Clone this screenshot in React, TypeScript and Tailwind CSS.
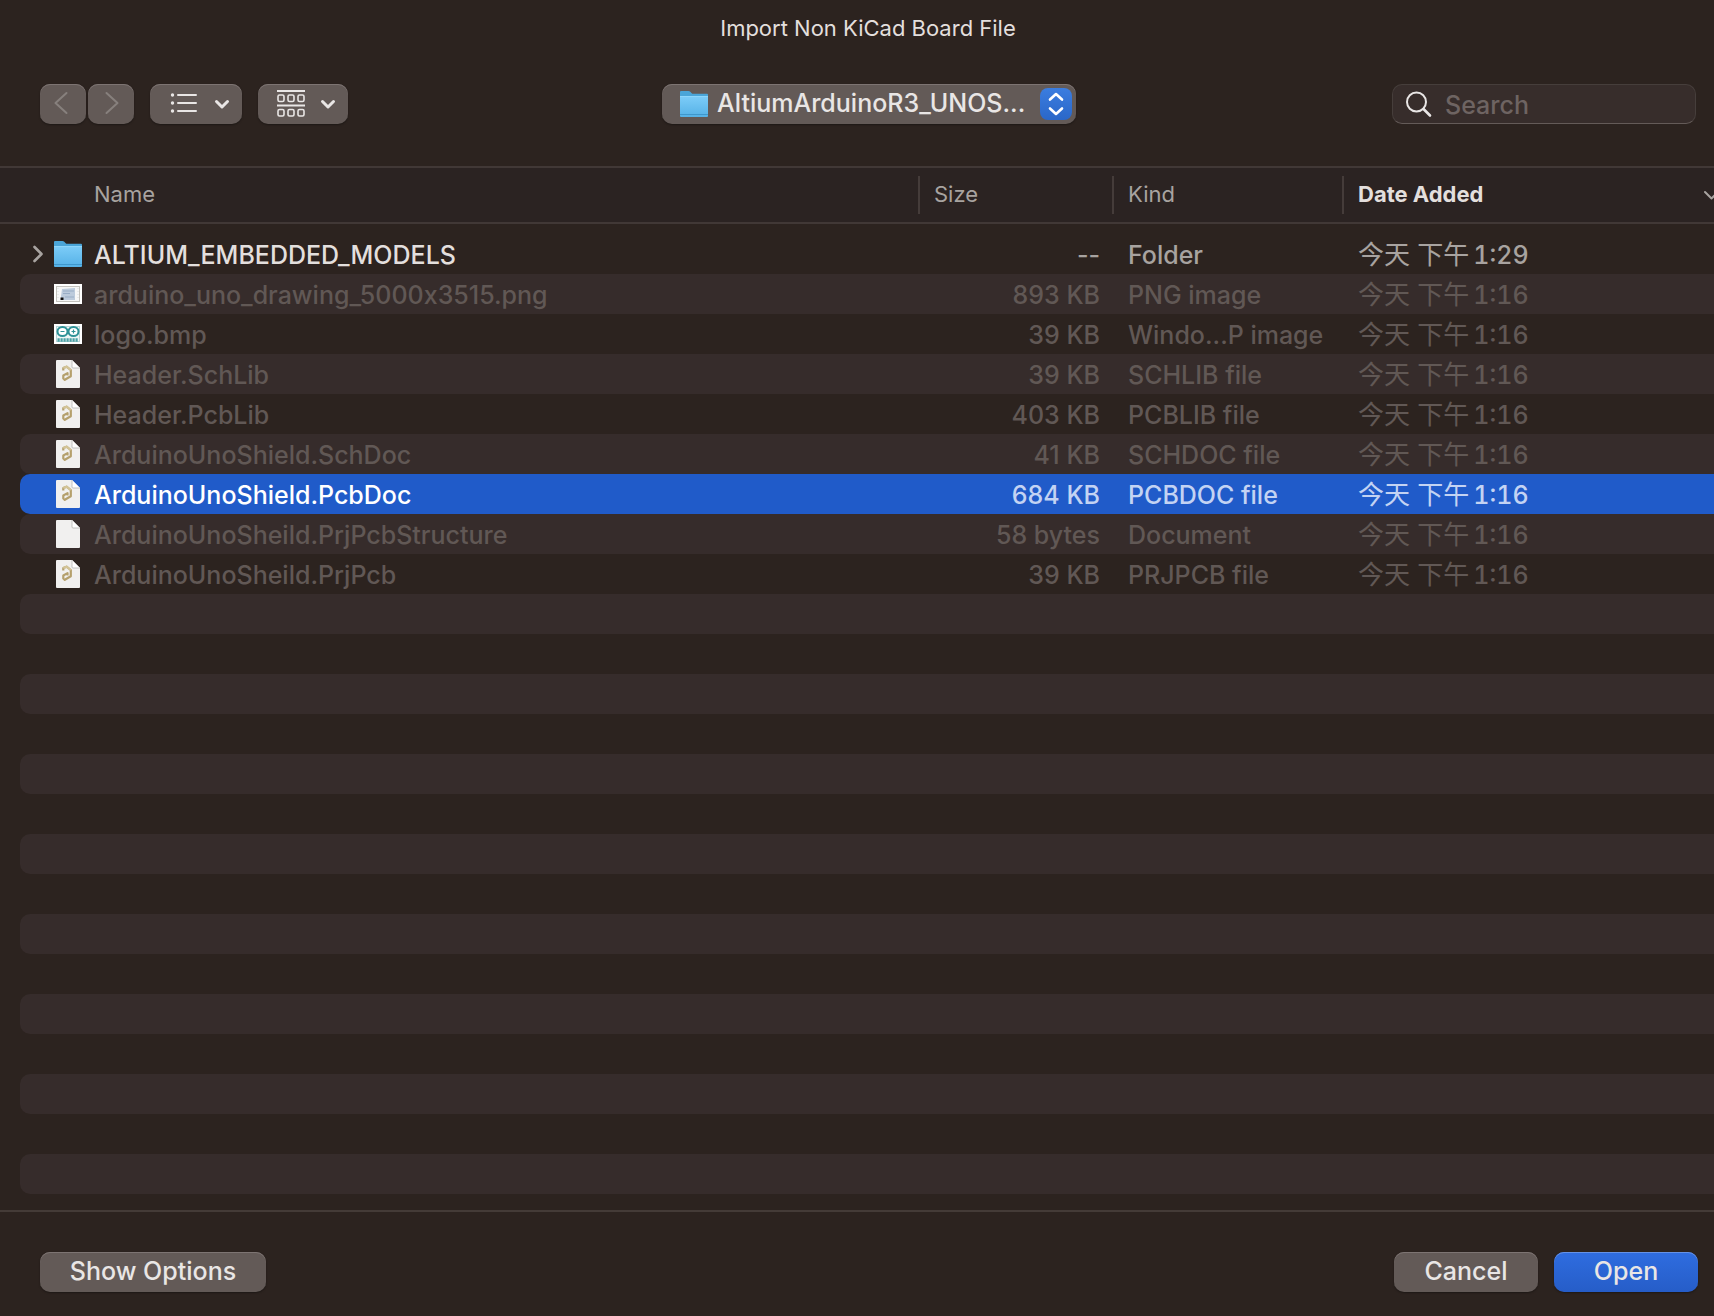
import React from "react";

const FONT = "font-['Inter','Noto_Sans_CJK_SC',sans-serif]";

type IconKind = "folder" | "png" | "logo" | "altium" | "blank";
type Entry = {
  name: string;
  size: string;
  kind: string;
  date: string;
  time: string;
  icon: IconKind;
  state: "enabled" | "disabled" | "selected";
};

const FILES: Entry[] = [
  { name: "ALTIUM_EMBEDDED_MODELS", size: "--", kind: "Folder", date: "今天 下午", time: "1:29", icon: "folder", state: "enabled" },
  { name: "arduino_uno_drawing_5000x3515.png", size: "893 KB", kind: "PNG image", date: "今天 下午", time: "1:16", icon: "png", state: "disabled" },
  { name: "logo.bmp", size: "39 KB", kind: "Windo...P image", date: "今天 下午", time: "1:16", icon: "logo", state: "disabled" },
  { name: "Header.SchLib", size: "39 KB", kind: "SCHLIB file", date: "今天 下午", time: "1:16", icon: "altium", state: "disabled" },
  { name: "Header.PcbLib", size: "403 KB", kind: "PCBLIB file", date: "今天 下午", time: "1:16", icon: "altium", state: "disabled" },
  { name: "ArduinoUnoShield.SchDoc", size: "41 KB", kind: "SCHDOC file", date: "今天 下午", time: "1:16", icon: "altium", state: "disabled" },
  { name: "ArduinoUnoShield.PcbDoc", size: "684 KB", kind: "PCBDOC file", date: "今天 下午", time: "1:16", icon: "altium", state: "selected" },
  { name: "ArduinoUnoSheild.PrjPcbStructure", size: "58 bytes", kind: "Document", date: "今天 下午", time: "1:16", icon: "blank", state: "disabled" },
  { name: "ArduinoUnoSheild.PrjPcb", size: "39 KB", kind: "PRJPCB file", date: "今天 下午", time: "1:16", icon: "altium", state: "disabled" },
];
const EMPTY_ROWS = Array.from({ length: 15 }, (_, i) => i + FILES.length);

function FolderIcon() {
  return (
    <svg width="30" height="30" viewBox="0 0 30 30" className="shrink-0" aria-hidden="true">
      <defs>
        <linearGradient id="folderFront" x1="0" y1="0" x2="0" y2="1">
          <stop offset="0" stopColor="#7cccf8" />
          <stop offset="1" stopColor="#55b1e6" />
        </linearGradient>
      </defs>
      <path d="M1 3q0-1 1-1h7.500q1 0 1.800.8l1.400 1.400q.6.600 1.500.6H28q1 0 1 1V12H1z" fill="#4aa5d8" />
      <path d="M1 7.500h28V27q0 1-1 1H2q-1 0-1-1z" fill="url(#folderFront)" />
      <path d="M1 7.500h28" stroke="#8ed6fb" strokeWidth="1" />
      <path d="M1 25.500h28" stroke="#3f97cb" strokeWidth="1" />
    </svg>
  );
}

function PngIcon() {
  return (
    <svg width="30" height="30" viewBox="0 0 30 30" className="shrink-0" aria-hidden="true">
      <rect x="1" y="5" width="28" height="20" fill="#fff" />
      <rect x="3.500" y="7.500" width="23" height="15" fill="#f6f7f7" stroke="#c4c3be" strokeWidth="1" />
      <path d="M5 9v12M25 9v12" stroke="#d9dcde" strokeWidth="1" strokeDasharray="1 2" />
      <path d="M9 10l13-1v12H8v-4z" fill="#bccbdc" />
      <path d="M10 12h11M10 14.500h7M12 18h9" stroke="#98adc5" strokeWidth="1" />
      <rect x="7.500" y="18.500" width="3" height="2.500" fill="#111" />
    </svg>
  );
}

function ArduinoIcon() {
  return (
    <svg width="30" height="30" viewBox="0 0 30 30" className="shrink-0" aria-hidden="true">
      <rect x="1" y="5" width="28" height="20" fill="#fff" />
      <rect x="3.500" y="7.500" width="23" height="15" fill="#eef6f6" stroke="#b4d4d6" strokeWidth="1" />
      <ellipse cx="9.500" cy="12.500" rx="5" ry="4.500" fill="#fff" stroke="#2f9297" strokeWidth="2" />
      <ellipse cx="20.500" cy="12.500" rx="5" ry="4.500" fill="#fff" stroke="#2f9297" strokeWidth="2" />
      <path d="M7.500 12.500h4M18.500 12.500h4M20.500 10.500v4" stroke="#2f9297" strokeWidth="1.200" />
      <path d="M4.500 21h21" stroke="#4ba1a5" strokeWidth="3.500" strokeDasharray="2.200 .8" />
    </svg>
  );
}

function DocIcon({ altium }: { altium: boolean }) {
  return (
    <svg width="30" height="30" viewBox="0 0 30 30" className="shrink-0" aria-hidden="true">
      <path d="M3 2q0-1 1-1h15l8 8v19q0 1-1 1H4q-1 0-1-1z" fill="#f1f0ef" />
      <path d="M19 1v7q0 1 1 1h7z" fill="#fff" />
      <path d="M19 1v7q0 1 1 1h7" fill="none" stroke="#b4b2b0" strokeWidth=".8" />
      {altium && (
        <g fill="none" strokeWidth="2.200" strokeLinejoin="round">
          <path d="M10.300 11.500V9l3.200-1.300 4.300 3.300v6.300l-6 3.500-1.500-1.300v-3l4.200-2.400v2.400" stroke="#b5a06c" />
          <path d="M10.300 9l3.200-1.300 4.300 3.300" stroke="#d3c497" />
        </g>
      )}
    </svg>
  );
}

function FileIcon({ kind }: { kind: IconKind }) {
  if (kind === "folder") return <FolderIcon />;
  if (kind === "png") return <PngIcon />;
  if (kind === "logo") return <ArduinoIcon />;
  return <DocIcon altium={kind === "altium"} />;
}

function ChevronDown() {
  return (
    <svg width="16" height="12" viewBox="0 0 16 12" fill="none" stroke="#e9e6e5" strokeWidth="3" strokeLinecap="round" strokeLinejoin="round" aria-hidden="true">
      <path d="M2.500 3.500l5.500 5.500L13.500 3.500" />
    </svg>
  );
}

const CONTROL = "h-10 rounded-[10px] bg-[#635a57] shadow-[inset_0_1px_0_#7d7472,0_1px_2px_rgba(0,0,0,0.35)]";

function Toolbar() {
  return (
    <div className="flex items-center justify-between pr-[18px] pl-10">
      <div className="flex flex-1 items-center pr-0.5">
        <button aria-label="Back" disabled className={`${CONTROL} flex w-[46px] items-center justify-center pr-1 pb-0.5`}>
          <svg width="16" height="24" viewBox="0 0 16 24" fill="none" stroke="#87807d" strokeWidth="2" strokeLinecap="round" strokeLinejoin="round">
            <path d="M13.500 2L2.500 12l11 10" />
          </svg>
        </button>
        <button aria-label="Forward" disabled className={`${CONTROL} ml-0.5 flex w-[46px] items-center justify-center pb-0.5`}>
          <svg width="16" height="24" viewBox="0 0 16 24" fill="none" stroke="#87807d" strokeWidth="2" strokeLinecap="round" strokeLinejoin="round">
            <path d="M3.500 2l11 10-11 10" />
          </svg>
        </button>
        <button aria-label="List view" className={`${CONTROL} ml-4 flex w-[92px] items-center justify-between pr-3 pl-5`}>
          <svg width="28" height="24" viewBox="0 0 28 24" fill="none" stroke="#e9e6e5" strokeWidth="2" strokeLinecap="round" aria-hidden="true">
            <path d="M8 3h18M8 11h18M8 19h18" />
            <path d="M2.500 3h.01M2.500 11h.01M2.500 19h.01" strokeWidth="3.400" />
          </svg>
          <ChevronDown />
        </button>
        <button aria-label="Group items" className={`${CONTROL} ml-4 flex w-[90px] items-center justify-between pr-3 pl-[18px]`}>
          <svg width="30" height="28" viewBox="0 0 30 28" fill="none" stroke="#e9e6e5" strokeWidth="1.600" aria-hidden="true">
            <path d="M1 1h28M1 15.500h28" strokeWidth="2" />
            <rect x="2" y="5" width="6" height="6.500" rx="1.500" />
            <rect x="12" y="5" width="6" height="6.500" rx="1.500" />
            <rect x="22" y="5" width="6" height="6.500" rx="1.500" />
            <rect x="2" y="19.500" width="6" height="6.500" rx="1.500" />
            <rect x="12" y="19.500" width="6" height="6.500" rx="1.500" />
            <rect x="22" y="19.500" width="6" height="6.500" rx="1.500" />
          </svg>
          <ChevronDown />
        </button>
      </div>
      <button className={`${CONTROL} flex w-[414px] items-center pr-1 pl-[17px] text-[25px] font-medium text-[#e9e6e5]`}>
        <FolderIcon />
        <span className="ml-2 flex-1 text-left whitespace-nowrap">AltiumArduinoR3_UNOS...</span>
        <span className="flex size-8 items-center justify-center rounded-lg bg-linear-to-b from-[#3b7de0] to-[#2a67c8]">
          <svg width="16" height="24" viewBox="0 0 16 24" fill="none" stroke="#fff" strokeWidth="2.600" strokeLinecap="round" strokeLinejoin="round" aria-hidden="true">
            <path d="M2 7.500L8 2l6 5.500M2 16.500L8 22l6-5.500" />
          </svg>
        </span>
      </button>
      <div className="flex flex-1 justify-end">
        <label className="flex h-10 w-[304px] items-center rounded-[10px] border border-[#463e3b] border-b-[#645b58] bg-[#372d2b] pl-3">
          <svg width="28" height="28" viewBox="0 0 28 28" fill="none" stroke="#e9e6e5" strokeLinecap="round" aria-hidden="true">
            <circle cx="11.500" cy="12" r="9.500" strokeWidth="2" />
            <path d="M18.500 19l6.500 6.500" strokeWidth="2.600" />
          </svg>
          <input
            type="text"
            aria-label="Search"
            placeholder="Search"
            className="ml-3 w-0 flex-1 bg-transparent pt-1 text-[25px] font-medium outline-none placeholder:text-[#6e6462]"
          />
        </label>
      </div>
    </div>
  );
}

function HeaderCell({ label }: { label: string }) {
  return (
    <th scope="col" className="border-y-2 border-[#413836] p-0 text-left font-normal">
      <button className="flex h-[38px] w-full items-center border-l-2 border-[#453c3a] pb-0.5 pl-[14px]">{label}</button>
    </th>
  );
}

function rowColors(state: Entry["state"]) {
  if (state === "enabled") return "text-[#a8a3a0]";
  if (state === "selected") return "text-[#c3d3f3]";
  return "text-[#615855]";
}

function rowFill(index: number, selected: boolean) {
  if (selected) return "bg-[#205bc9]";
  return index % 2 ? "bg-[#362c2b]" : "";
}

function FileTable() {
  return (
    <div className="overflow-hidden pb-4">
      <table className="w-full table-fixed border-separate border-spacing-0 text-[25px] leading-9">
        <colgroup>
          <col className="w-5" />
          <col />
          <col className="w-[194px]" />
          <col className="w-[230px]" />
          <col className="w-[372px]" />
        </colgroup>
        <thead>
          <tr className="h-[58px] bg-[#2b2322] text-[22px] text-[#a8a3a0]">
            <th scope="col" colSpan={2} className="border-y-2 border-[#413836] p-0 pb-0.5 pl-[94px] text-left font-normal">
              <button className="block">Name</button>
            </th>
            <HeaderCell label="Size" />
            <HeaderCell label="Kind" />
            <th scope="col" aria-sort="descending" className="border-y-2 border-[#413836] p-0 text-left">
              <button className="flex h-[38px] w-full items-center justify-between border-l-2 border-[#453c3a] pb-0.5 pl-[14px] font-bold text-[#e3dfdd]">
                Date Added
                <svg width="16" height="12" viewBox="0 0 16 12" className="-mr-1.5 shrink-0" fill="none" stroke="#a8a3a0" strokeWidth="2" strokeLinecap="round" strokeLinejoin="round" aria-hidden="true">
                  <path d="M1 4l6.500 6.500L14 4" />
                </svg>
              </button>
            </th>
          </tr>
        </thead>
        <tbody className="font-medium before:block before:h-2.5 before:content-['']">
          {FILES.map((file, index) => {
            const fill = rowFill(index, file.state === "selected");
            const nameColor =
              file.state === "enabled" ? "text-[#e3dfdd]" : file.state === "selected" ? "text-white" : "";
            return (
              <tr key={file.name} className={`h-10 whitespace-nowrap ${rowColors(file.state)}`}>
                <td className="p-0" />
                <td className={`rounded-l-[10px] p-0 ${fill}`}>
                  <div className="flex h-10 items-center pl-[11px]">
                    <span className="flex w-[22px] items-center">
                      {file.icon === "folder" && (
                        <button aria-label="Expand folder" className="flex">
                          <svg width="14" height="20" viewBox="0 0 14 20" fill="none" stroke="#a8a3a0" strokeWidth="2.600" strokeLinecap="round" strokeLinejoin="round">
                            <path d="M3.500 3l7 7-7 7" />
                          </svg>
                        </button>
                      )}
                    </span>
                    <FileIcon kind={file.icon} />
                    <span className={`ml-[11px] pt-0.5 [font-feature-settings:'calt'_0] ${nameColor}`}>{file.name}</span>
                  </div>
                </td>
                <td className={`p-0 pt-0.5 pr-3 text-right ${fill}`}>{file.size}</td>
                <td className={`p-0 pt-0.5 pl-4 ${fill}`}>{file.kind}</td>
                <td className={`p-0 pl-4 ${fill}`}>
                  <div className="flex h-10 items-center gap-1 pt-0.5">
                    <span className="text-[26px] font-normal">{file.date}</span>
                    <span className="tabular-nums">{file.time}</span>
                  </div>
                </td>
              </tr>
            );
          })}
          {EMPTY_ROWS.map((index) => (
            <tr key={index} className="h-10">
              <td className="p-0" />
              <td colSpan={4} className={`rounded-l-[10px] p-0 ${rowFill(index, false)}`} />
            </tr>
          ))}
        </tbody>
      </table>
    </div>
  );
}

export default function App() {
  return (
    <main className={`flex min-h-screen flex-col bg-[#2c231f] text-[#e3dfdd] ${FONT}`}>
      <h1 className="pt-3 pb-10 pl-[22px] text-center text-[22px] leading-8">Import Non KiCad Board File</h1>
      <Toolbar />
      <div className="mt-[42px] flex-1">
        <FileTable />
      </div>
      <footer className="flex items-center gap-4 border-t-2 border-[#443b37] px-4 pt-10 pb-6 pl-10 text-[25px] font-medium text-[#e9e6e5]">
        <button className={`${CONTROL} mr-auto w-[226px]`}>Show Options</button>
        <button className={`${CONTROL} w-36`}>Cancel</button>
        <button className="h-10 w-36 rounded-[10px] bg-linear-to-b from-[#2f6de0] to-[#265dc8] shadow-[inset_0_1px_0_#6592e6,0_1px_2px_rgba(0,0,0,0.35)]">
          Open
        </button>
      </footer>
    </main>
  );
}
